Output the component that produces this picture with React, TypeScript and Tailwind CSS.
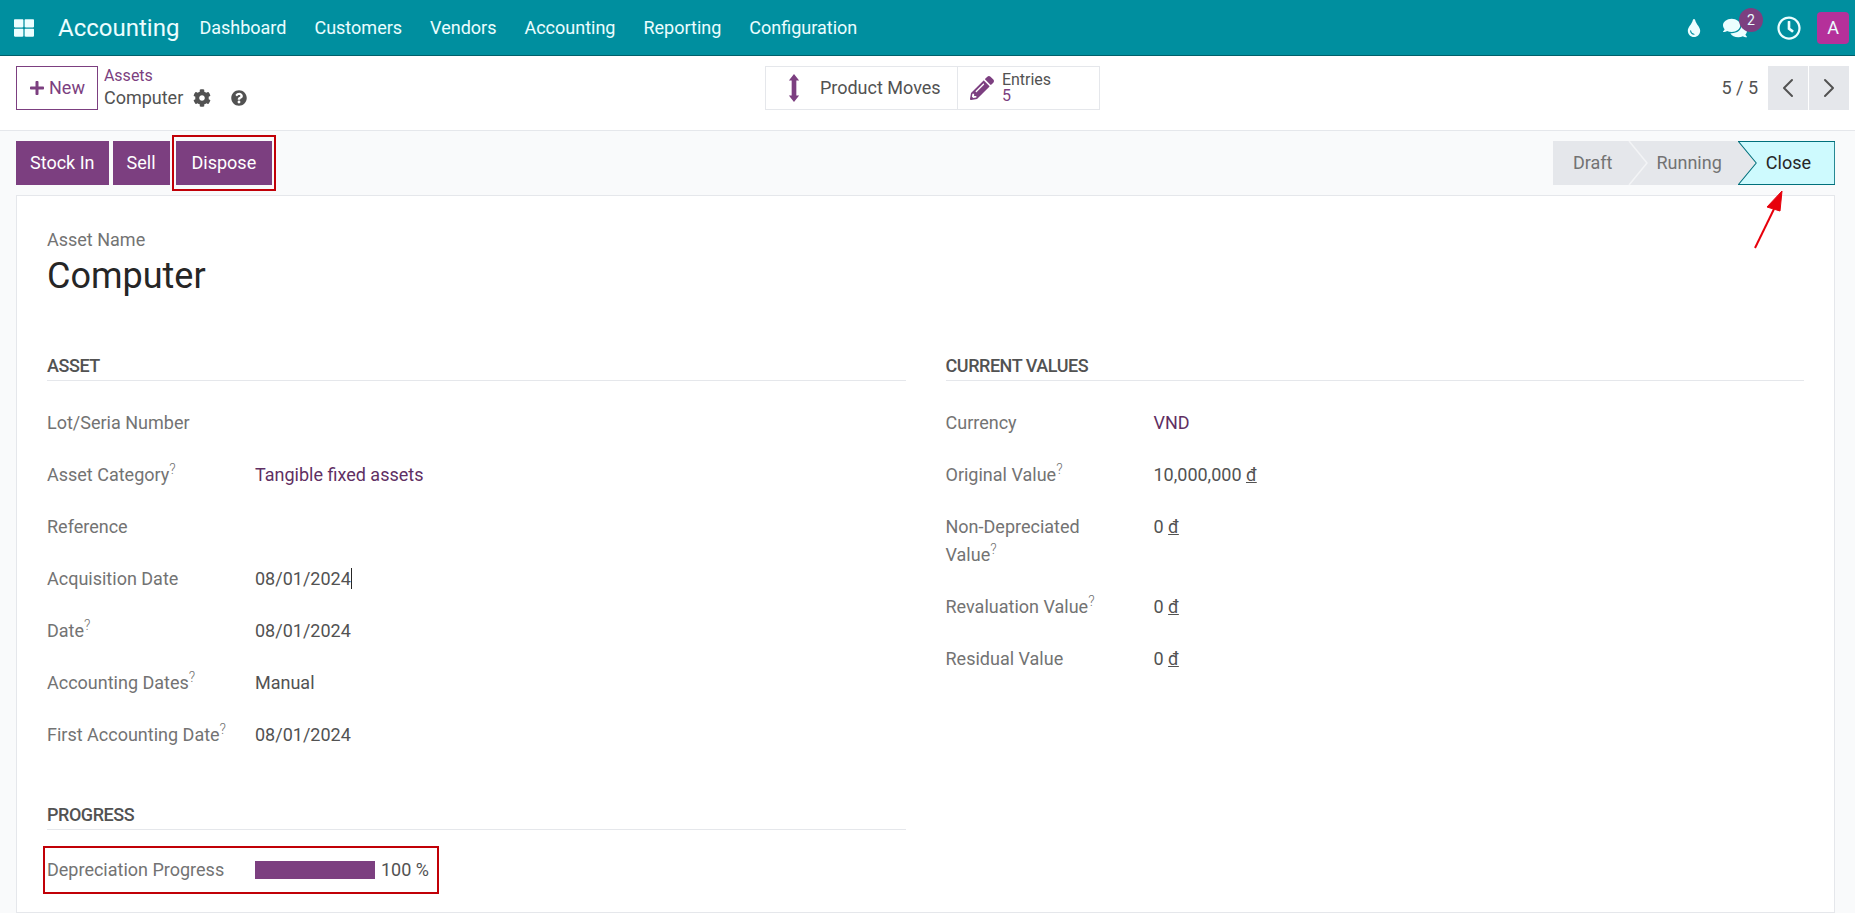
import React from "react";
import { FaCog, FaComments, FaPencilAlt, FaPlus, FaQuestionCircle, FaRegClock, FaThLarge, FaTint } from "react-icons/fa";
import { ChevronLeft, ChevronRight } from "lucide-react";

const navItems = ["Dashboard", "Customers", "Vendors", "Accounting", "Reporting", "Configuration"];

const Help = () => <sup className="text-sm font-light leading-none">?</sup>;

const Field = ({ label, help, children }: { label: string; help?: boolean; children?: React.ReactNode }) => (
  <div className="flex py-3 leading-7">
    <div className="w-52 shrink-0 pr-5 text-neutral-500">
      {label}
      {help && <Help />}
    </div>
    <div>{children}</div>
  </div>
);

const Money = ({ value }: { value: string }) => (
  <span>
    {value} <span className="underline">đ</span>
  </span>
);

const SectionTitle = ({ title }: { title: string }) => (
  <h3 className="border-b border-gray-200 text-lg font-medium uppercase leading-7 tracking-tight">{title}</h3>
);

const App = () => {
  return (
    <div className="relative flex h-screen flex-col overflow-hidden bg-gray-50 font-['Roboto',sans-serif] text-lg text-neutral-600">
      <nav className="flex h-14 items-center justify-between border-b border-[#00606b] bg-[#008f9f] pl-3.5 pr-1.5 text-cyan-50">
        <div className="flex items-center">
          <FaThLarge className="text-xl" />
          <span className="ml-6 mr-5 text-2xl">Accounting</span>
          <div className="flex gap-7">
            {navItems.map((item) => (
              <span key={item}>{item}</span>
            ))}
          </div>
        </div>
        <div className="flex items-center gap-4">
          <FaTint className="text-lg" />
          <div className="relative ml-1">
            <FaComments className="text-2xl" />
            <span className="absolute -right-4 -top-2 flex h-6 w-6 items-center justify-center rounded-full bg-[#7c3f80] text-sm">
              2
            </span>
          </div>
          <FaRegClock className="ml-3.5 text-2xl" />
          <span className="flex h-8 w-8 items-center justify-center rounded-sm bg-[#b5309a]">A</span>
        </div>
      </nav>

      <div className="grid grid-cols-3 items-start border-b border-gray-200 bg-white pb-5 pl-4 pr-1.5 pt-2.5">
        <div className="flex items-start gap-1.5">
          <button className="flex h-11 items-center gap-1 border border-[#7c3f80] px-3 text-[#7c3f80]">
            <FaPlus className="text-base" />
            New
          </button>
          <div className="pt-0.5">
            <div className="text-base leading-4 text-[#7c3f80]">Assets</div>
            <div className="mt-0.5 flex items-center gap-2.5 leading-6">
              Computer
              <FaCog className="text-lg" />
              <FaQuestionCircle className="ml-2.5 text-base" />
            </div>
          </div>
        </div>
        <div className="flex justify-center">
          <div className="flex h-11 border border-gray-200">
            <div className="flex w-48 items-center gap-5 border-r border-gray-200 pl-5.5">
              <svg viewBox="0 0 12 30" className="h-7 w-3 fill-[#7c3f80]">
                <path d="M6 0l5.500 7H8.500v16h3L6 30 .5 23h3V7h-3z" />
              </svg>
              Product Moves
            </div>
            <div className="flex items-center gap-2 pl-3 pr-12">
              <FaPencilAlt className="text-2xl text-[#7c3f80]" />
              <div className="text-base leading-4">
                <div>Entries</div>
                <div className="text-[#7c3f80]">5</div>
              </div>
            </div>
          </div>
        </div>
        <div className="flex items-center justify-end gap-2.5">
          <span>5 / 5</span>
          <div className="flex gap-px">
            <span className="flex h-11 w-10 items-center justify-center bg-gray-200">
              <ChevronLeft className="h-8 w-8" strokeWidth={1.5} />
            </span>
            <span className="flex h-11 w-10 items-center justify-center bg-gray-200">
              <ChevronRight className="h-8 w-8" strokeWidth={1.5} />
            </span>
          </div>
        </div>
      </div>

      <div className="flex items-center justify-between pb-2.5 pl-4 pr-5 pt-2.5">
        <div className="flex items-center gap-1 text-white">
          <button className="h-11 bg-[#7c3f80] px-3.5">Stock In</button>
          <button className="h-11 bg-[#7c3f80] px-3.5">Sell</button>
          <div className="relative ml-0.5">
            <button className="h-11 bg-[#7c3f80] px-4">Dispose</button>
            <div className="absolute -inset-x-1 -inset-y-1.5 border-2 border-red-700"></div>
          </div>
        </div>
        <div className="flex h-11 items-center bg-gray-200 text-neutral-500">
          <span className="pl-5 pr-4">Draft</span>
          <span className="relative pl-7 pr-4 leading-11">
            <svg viewBox="0 0 20 44" preserveAspectRatio="none" className="absolute inset-y-0 left-0 h-11 w-5">
              <path d="M1 0l18 22L1 44" fill="none" className="stroke-gray-100" strokeWidth="1.500" />
            </svg>
            Running
          </span>
          <span className="relative pl-7 pr-6 leading-11 text-neutral-800">
            <svg viewBox="0 0 96 44" preserveAspectRatio="none" className="absolute inset-0 h-11 w-full">
              <path d="M.5 .5h95v43H.5L18 22z" className="fill-cyan-100 stroke-[#00707c]" />
            </svg>
            <span className="relative">Close</span>
          </span>
        </div>
      </div>

      <div className="ml-4 mr-5 flex-1 border border-gray-200 bg-white px-7.5 pt-7.5">
        <div className="text-neutral-500">Asset Name</div>
        <div className="mt-0.5 text-4xl leading-10 text-neutral-800">Computer</div>

        <div className="mt-14 grid grid-cols-2 gap-10">
          <div>
            <SectionTitle title="Asset" />
            <div className="mt-4">
              <Field label="Lot/Seria Number" />
              <Field label="Asset Category" help>
                <span className="text-[#5f2f63]">Tangible fixed assets</span>
              </Field>
              <Field label="Reference" />
              <Field label="Acquisition Date">
                <span className="border-r border-neutral-800">08/01/2024</span>
              </Field>
              <Field label="Date" help>
                08/01/2024
              </Field>
              <Field label="Accounting Dates" help>
                Manual
              </Field>
              <Field label="First Accounting Date" help>
                08/01/2024
              </Field>
            </div>
            <div className="mt-10">
              <SectionTitle title="Progress" />
            </div>
            <div className="-ml-1 mt-4 flex w-fit items-center border-2 border-red-700 py-2 pl-0.5 pr-2 leading-7">
              <span className="w-52 shrink-0 text-neutral-500">Depreciation Progress</span>
              <span className="h-4.5 w-30 shrink-0 bg-[#7c3f80]"></span>
              <span className="ml-1.5 whitespace-nowrap">100 %</span>
            </div>
          </div>
          <div>
            <SectionTitle title="Current Values" />
            <div className="mt-4">
              <Field label="Currency">
                <span className="text-[#5f2f63]">VND</span>
              </Field>
              <Field label="Original Value" help>
                <Money value="10,000,000" />
              </Field>
              <Field label="Non-Depreciated Value" help>
                <Money value="0" />
              </Field>
              <Field label="Revaluation Value" help>
                <Money value="0" />
              </Field>
              <Field label="Residual Value">
                <Money value="0" />
              </Field>
            </div>
          </div>
        </div>
      </div>

      {/* annotation arrow */}
      <svg viewBox="0 0 32 64" className="absolute right-18 top-47 h-16 w-8 fill-red-600 stroke-red-600">
        <path d="M4 60L23 21" strokeWidth="2" />
        <path d="M31 3l-2 20-13-4z" />
      </svg>
    </div>
  );
};

export default App;
